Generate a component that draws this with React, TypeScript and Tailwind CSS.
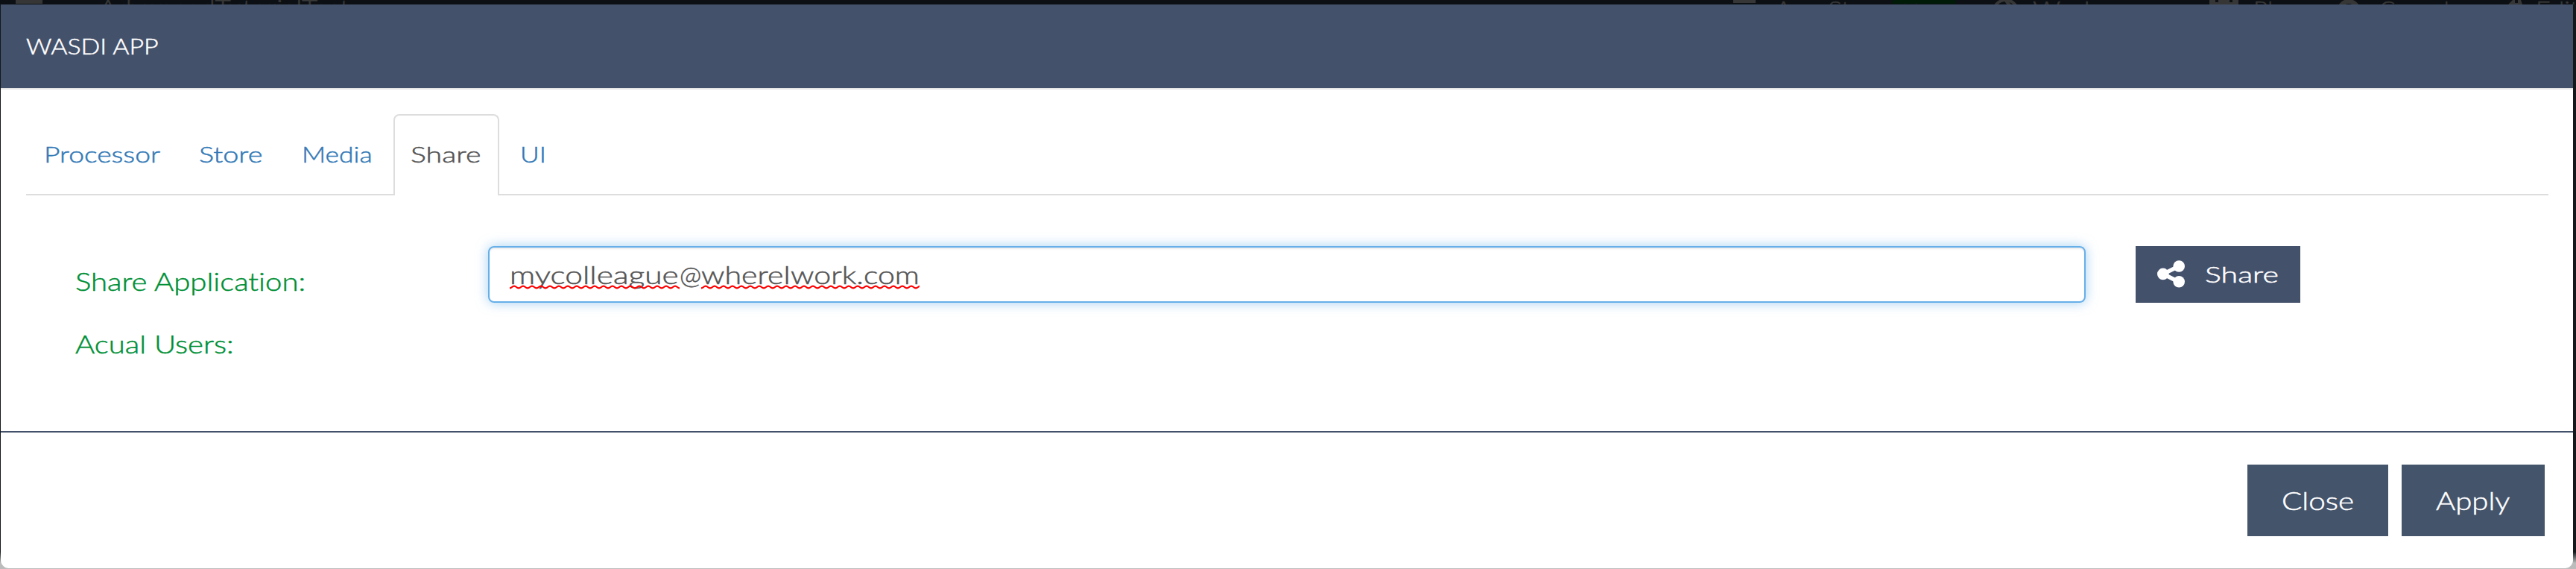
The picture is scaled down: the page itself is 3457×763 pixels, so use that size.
import type { ReactNode } from "react";

/* Wide light lettering: the inner span is stretched from its left edge. */
function Label({ box, stretch, children }: { box: string; stretch: string; children: ReactNode }) {
  return (
    <span className={`block shrink-0 whitespace-nowrap ${box}`}>
      <span className={`inline-block origin-left align-top ${stretch}`}>{children}</span>
    </span>
  );
}

function Squiggle({ id }: { id: string }) {
  return (
    <svg className="absolute left-0 top-[31px] h-[6px] w-full" aria-hidden="true">
      <defs>
        <pattern id={id} width="12" height="6" patternUnits="userSpaceOnUse">
          <path d="M-6 1.6 C-3 1.6 -3 4.4 0 4.4 S3 1.6 6 1.6 S9 4.4 12 4.4 S15 1.6 18 1.6" fill="none" stroke="#ff0000" strokeWidth="2.2" />
        </pattern>
      </defs>
      <rect width="100%" height="6" fill={`url(#${id})`} />
    </svg>
  );
}

function ShareIcon() {
  return (
    <svg className="h-[37px] w-[37px] shrink-0" viewBox="0 0 37 37" fill="#fff" aria-hidden="true">
      <path d="M29 8 8 18.4 29 29" fill="none" stroke="#fff" strokeWidth="5.4" />
      <circle cx="29.2" cy="8" r="7.8" />
      <circle cx="7.8" cy="18.4" r="7.8" />
      <circle cx="29.2" cy="28.8" r="7.8" />
    </svg>
  );
}

function Backdrop() {
  return (
    <div className="flex h-[6px] w-full overflow-hidden bg-[#0c1014] text-[30px] leading-[30px] text-[#383838]">
      <div className="ml-[21px] h-[5px] w-[36px] shrink-0 bg-[#363636]" />
      <div className="-mt-[6px] ml-[76px] w-[2193px] shrink-0">
        <Label box="w-[330px]" stretch="scale-x-[1.22]">AdvancedTutorialTest</Label>
      </div>
      <div className="h-[4px] w-[30px] shrink-0 bg-[#363636]" />
      <div className="-mt-[4px] ml-[26px] w-[157px] shrink-0">
        <Label box="w-[140px]" stretch="scale-x-[1.17]">App Store</Label>
      </div>
      <div className="h-[5px] w-[86px] shrink-0 overflow-hidden rounded-t-[4px] bg-[#001a08] pl-[14px]">
        <div className="-mt-[1px]">New</div>
      </div>
      <svg className="ml-[49px] h-[6px] w-[35px] shrink-0" viewBox="0 0 35 6" aria-hidden="true">
        <circle cx="17.5" cy="16" r="16" fill="none" stroke="#363636" strokeWidth="4" />
        <path d="M15 0h5l5 6h-6z" fill="#363636" />
      </svg>
      <div className="-mt-[4px] ml-[19px] w-[237px] shrink-0">
        <Label box="w-[190px]" stretch="scale-x-[1.22]">Workspaces</Label>
      </div>
      <svg className="h-[6px] w-[39px] shrink-0" viewBox="0 0 39 6" aria-hidden="true">
        <path d="M0 0h8v3h4V0h15v3h4V0h8v6H0z" fill="#363636" />
      </svg>
      <div className="-mt-[4px] ml-[20px] w-[112px] shrink-0">
        <Label box="w-[62px]" stretch="scale-x-[1.1]">Plan</Label>
      </div>
      <svg className="h-[6px] w-[32px] shrink-0" viewBox="0 0 32 6" aria-hidden="true">
        <circle cx="16" cy="15" r="13" fill="none" stroke="#363636" strokeWidth="6" />
      </svg>
      <div className="-mt-[4px] ml-[25px] w-[169px] shrink-0">
        <Label box="w-[104px]" stretch="scale-x-[1.05]">Console</Label>
      </div>
      <svg className="h-[6px] w-[23px] shrink-0" viewBox="0 0 23 6" aria-hidden="true">
        <path d="M4 6 10 0h3v4h4V0h4l2 6z" fill="#363636" />
      </svg>
      <div className="-mt-[4px] ml-[18px] shrink-0">
        <Label box="w-[50px]" stretch="scale-x-[1.15]">Edit</Label>
      </div>
    </div>
  );
}

function Tab({ pad, children }: { pad: string; children: ReactNode }) {
  return (
    <a className={`flex h-[108px] shrink-0 items-center pb-[2px] text-[#337ab7] ${pad}`}>{children}</a>
  );
}

export default function App() {
  return (
    <div className="flex h-[763px] w-[3457px] flex-col overflow-hidden bg-[linear-gradient(to_bottom,#14181b_0,#14181b_740px,#bcbcbc_755px)] font-['Lato','Liberation_Sans',sans-serif] font-light [-webkit-text-stroke-width:0.5px] [font-variant-ligatures:none]">
      <Backdrop />
      <div className="ml-px flex h-[756px] w-[3452px] flex-col overflow-hidden rounded-b-[11px] bg-white">
        <header className="flex h-[114px] shrink-0 items-center border-b-2 border-[#e5e5e5] bg-[#44516b] pb-[2px] pl-[34px] text-[30px] leading-[30px] text-white">
          <Label box="w-[180px]" stretch="scale-x-[1.13]">WASDI APP</Label>
        </header>

        <nav className="ml-[34px] mr-[33px] mt-[33px] flex h-[109px] shrink-0 text-[30px] leading-[30px]">
          <div className="flex w-[493px] shrink-0 border-b-2 border-[#dddddd]">
            <Tab pad="pl-[24px] w-[232px]"><Label box="w-[156px]" stretch="scale-x-[1.24]">Processor</Label></Tab>
            <Tab pad="w-[138px]"><Label box="w-[86px]" stretch="scale-x-[1.26]">Store</Label></Tab>
            <Tab pad="w-[100px]"><Label box="w-[92px]" stretch="scale-x-[1.18]">Media</Label></Tab>
          </div>
          <div className="flex w-[142px] shrink-0 items-center rounded-t-[8px] border-2 border-b-0 border-[#dddddd] pb-[5px] pl-[21px] text-[#555555]">
            <Label box="w-[95px]" stretch="scale-x-[1.31]">Share</Label>
          </div>
          <div className="flex flex-1 border-b-2 border-[#dddddd]">
            <Tab pad="pl-[28px]"><Label box="w-[36px]" stretch="scale-x-[1.18]">UI</Label></Tab>
          </div>
        </nav>

        <section className="flex h-[316px] shrink-0 pt-[68px]">
          <div className="ml-[100px] mt-[30px] flex w-[554px] shrink-0 flex-col gap-[50px] text-[34px] leading-[34px] text-[#009036]">
            <Label box="w-[314px]" stretch="scale-x-[1.18]">Share Application:</Label>
            <Label box="w-[214px]" stretch="scale-x-[1.18]">Acual Users:</Label>
          </div>
          <div className="flex h-[76px] w-[2144px] shrink-0 items-center rounded-[8px] border-2 border-[#66afe9] bg-white pl-[27px] text-[34px] leading-[34px] text-[#555555] shadow-[inset_0_2px_2px_rgba(0,0,0,0.075),0_0_16px_rgba(102,175,233,0.6)]">
            <div className="relative w-[228px]">
              <Label box="w-[228px]" stretch="scale-x-[1.25]">mycolleague</Label>
              <Squiggle id="wave-user" />
            </div>
            <Label box="w-[29px]" stretch="scale-x-[1.04]">@</Label>
            <div className="relative w-[293px]">
              <Label box="w-[293px]" stretch="scale-x-[1.21]">whereIwork.com</Label>
              <Squiggle id="wave-host" />
            </div>
          </div>
          <button className="ml-[67px] flex h-[76px] w-[221px] shrink-0 items-center bg-[#44516b] pb-[2px] pl-[29px] text-left text-[30px] leading-[30px] text-white">
            <ShareIcon />
            <span className="ml-[27px]"><Label box="w-[98px]" stretch="scale-x-[1.37]">Share</Label></span>
          </button>
        </section>

        <footer className="flex h-[184px] shrink-0 items-start justify-end gap-[18px] border-t-2 border-[#44516b] pr-[38px] pt-[43px] text-[34px] leading-[34px] text-white">
          <button className="flex h-[96px] w-[189px] items-center bg-[#44546b] pl-[46px] text-left">
            <Label box="w-[98px]" stretch="scale-x-[1.19]">Close</Label>
          </button>
          <button className="flex h-[96px] w-[192px] items-center bg-[#44546b] pl-[46px] text-left">
            <Label box="w-[99px]" stretch="scale-x-[1.18]">Apply</Label>
          </button>
        </footer>
      </div>
    </div>
  );
}
